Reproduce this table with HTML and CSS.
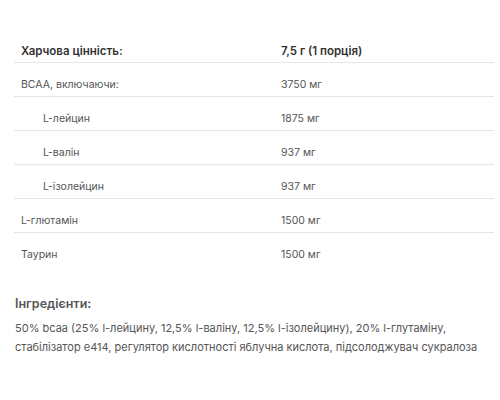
FILE: index.html
```html
<!DOCTYPE html>
<html lang="uk">
<head>
<meta charset="utf-8">
<link rel="stylesheet" href="styles.css">
</head>
<body>
<div class="page">
  <table class="nutrition">
    <tr class="head"><td class="name">Харчова цінність:</td><td class="val">7,5 г (1 порція)</td></tr>
    <tr><td class="name">BCAA, включаючи:</td><td class="val">3750 мг</td></tr>
    <tr><td class="name sub">L-лейцин</td><td class="val">1875 мг</td></tr>
    <tr><td class="name sub">L-валін</td><td class="val">937 мг</td></tr>
    <tr><td class="name sub">L-ізолейцин</td><td class="val">937 мг</td></tr>
    <tr><td class="name">L-глютамін</td><td class="val">1500 мг</td></tr>
    <tr class="last"><td class="name">Таурин</td><td class="val">1500 мг</td></tr>
  </table>
  <h3 class="ing-title">Інгредієнти:</h3>
  <p class="ing-text">50% bcaa (25% l-лейцину, 12,5% l-валіну, 12,5% l-ізолейцину), 20% l-глутаміну, стабілізатор e414, регулятор кислотності яблучна кислота, підсолоджувач сукралоза</p>
</div>
</body>
</html>
```
FILE: styles.css
```css
body {
  margin: 0;
  background: #fff;
  font-family: Inter, Roboto, "Liberation Sans", sans-serif;
  color: #555;
}
.page {
  padding: 29px 6px 0 14px;
}
.nutrition {
  width: 480px;
  table-layout: fixed;
  border-collapse: collapse;
  font-size: 10.5px;
}
.nutrition td {
  padding: 14px 0 3px 7px;
  line-height: 16px;
  border-bottom: 1px solid #e3e7ec;
}
.nutrition .last td {
  border-bottom: none;
}
.nutrition .name {
  width: 260px;
}
.nutrition .val {
  padding-left: 0;
}
.nutrition .sub {
  padding-left: 29px;
}
.nutrition .head td {
  font-size: 11.5px;
  font-weight: 600;
  color: #333;
}
.ing-title {
  margin: 30px 0 0 1px;
  font-size: 12.5px;
  font-weight: 600;
  color: #555;
}
.ing-text {
  margin: 8px 0 0 1px;
  font-size: 11px;
  line-height: 19px;
  color: #555;
}
```
